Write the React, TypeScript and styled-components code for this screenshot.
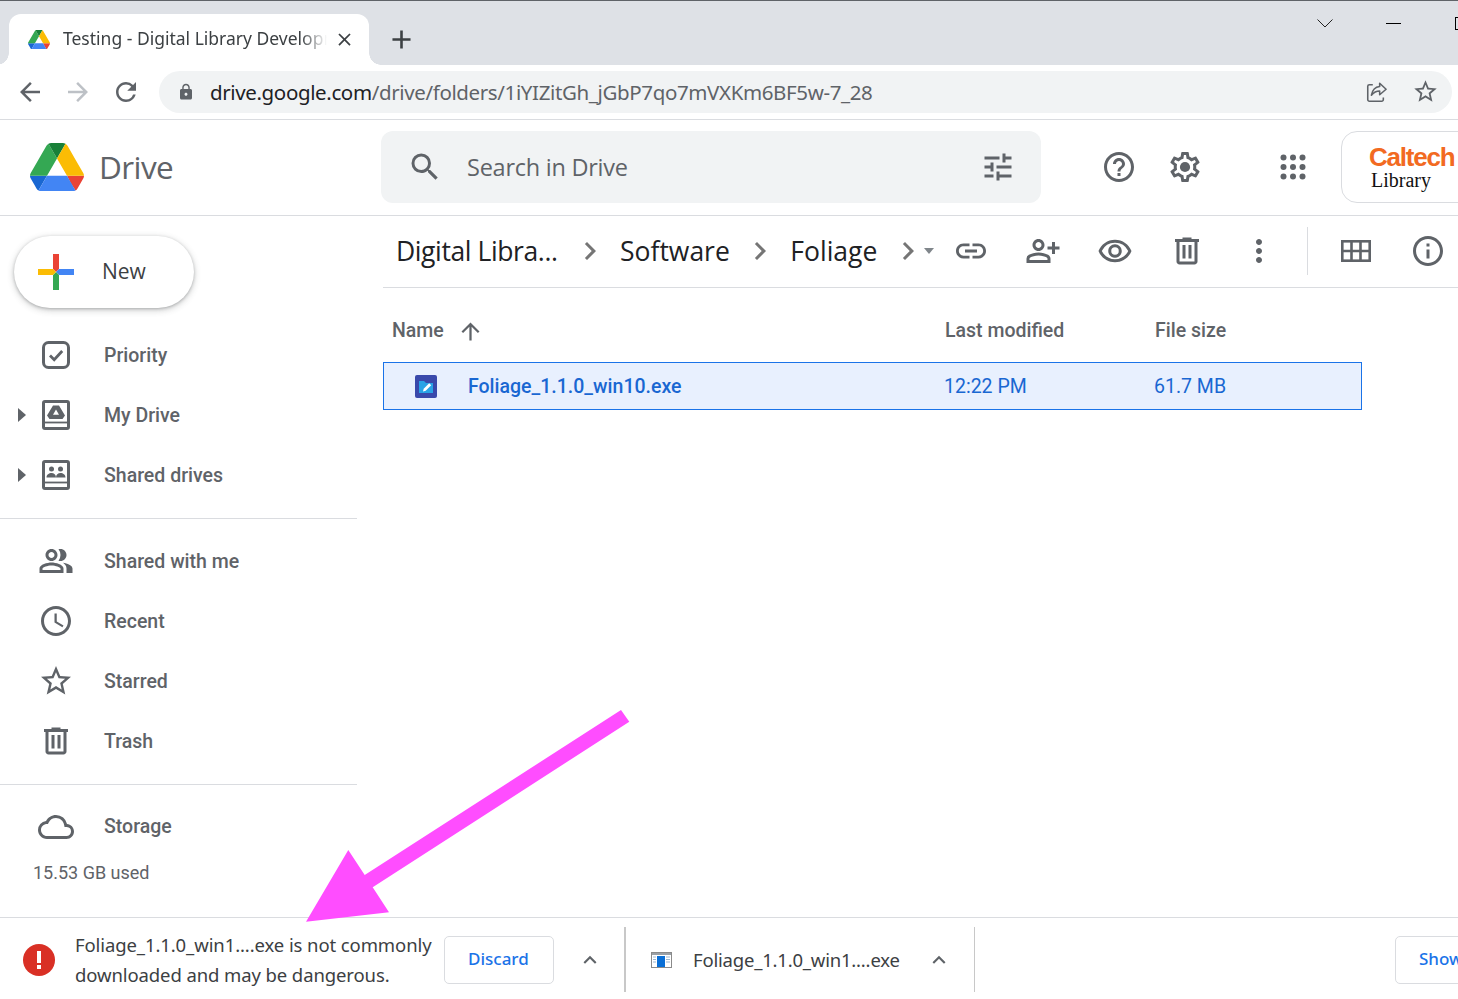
import React from "react";
import styled, { createGlobalStyle } from "styled-components";
import {
  MdAdd,
  MdArrowBack,
  MdArrowForward,
  MdArrowUpward,
  MdChevronRight,
  MdClose,
  MdExpandLess,
  MdHelpOutline,
  MdInfoOutline,
  MdLink,
  MdLock,
  MdMoreVert,
  MdOutlineAccessTime,
  MdOutlineCloud,
  MdOutlinePeopleAlt,
  MdOutlinePersonAddAlt,
  MdOutlineRemoveRedEye,
  MdRefresh,
  MdSearch,
  MdStarBorder,
  MdTune,
} from "react-icons/md";

const GlobalStyle = createGlobalStyle`
  html, body {
    margin: 0;
    padding: 0;
    background: #fff;
  }
  * {
    box-sizing: border-box;
  }
`;

const grey = "#5f6368";
const chromeFont = `"Noto Sans", "Open Sans", sans-serif`;
const googleFont = `"Open Sans", "Noto Sans", sans-serif`;
const bodyFont = `Roboto, "Liberation Sans", sans-serif`;

const Page = styled.div`
  position: relative;
  width: 1458px;
  height: 999px;
  overflow: hidden;
  display: flex;
  flex-direction: column;
  background: #fff;
`;

const TabStrip = styled.div`
  height: 65px;
  flex-shrink: 0;
  display: flex;
  align-items: flex-end;
  padding-left: 9px;
  background: #dee1e6;
  border-top: 1px solid #5f6368;
`;

const Tab = styled.div`
  position: relative;
  width: 360px;
  height: 51px;
  flex-shrink: 0;
  display: flex;
  align-items: center;
  padding-left: 19px;
  background: #fff;
  border-radius: 12px 12px 0 0;

  &::before,
  &::after {
    content: "";
    position: absolute;
    bottom: 0;
    width: 12px;
    height: 12px;
    background: radial-gradient(circle at 0 0, #dee1e6 11.5px, #fff 12px);
  }
  &::before {
    left: -12px;
  }
  &::after {
    right: -12px;
    transform: scaleX(-1);
  }
`;

const TabTitle = styled.span`
  width: 264px;
  margin-left: 13px;
  padding-bottom: 4px;
  overflow: hidden;
  white-space: nowrap;
  font: 400 17.5px/24px ${chromeFont};
  letter-spacing: 0;
  color: #3c4043;
  -webkit-mask-image: linear-gradient(to right, #000 90%, transparent 100%);
  mask-image: linear-gradient(to right, #000 90%, transparent 100%);
`;

const TabClose = styled.span`
  display: flex;
  margin-left: 7px;
  color: #3c4043;
`;

const NewTab = styled.span`
  display: flex;
  align-self: center;
  margin: 12px 0 0 17px;
  color: #3c4043;
`;

const WindowControls = styled.div`
  margin-left: auto;
  margin-right: -11px;
  align-self: flex-start;
  display: flex;
  align-items: center;
  height: 44px;
  flex-shrink: 0;
`;

const WindowMin = styled.span`
  width: 15px;
  height: 1px;
  margin: 0 54px 0 53px;
  background: #000;
`;

const WindowMax = styled.span`
  width: 14px;
  height: 13px;
  border: 1px solid #000;
`;

const Toolbar = styled.div`
  height: 55px;
  flex-shrink: 0;
  display: flex;
  align-items: center;
  gap: 18px;
  padding: 0 6px 1px 15px;
  border-bottom: 1px solid #dadce0;
`;

const NavIcon = styled.span<{ $disabled?: boolean }>`
  display: flex;
  width: 30px;
  color: ${(p) => (p.$disabled ? "#bdc1c6" : grey)};
`;

const Omnibox = styled.div`
  flex: 1;
  height: 42px;
  display: flex;
  align-items: center;
  padding: 0 13px 0 18px;
  background: #f1f3f4;
  border-radius: 21px;
  color: ${grey};
`;

const UrlText = styled.span`
  margin-left: 15px;
  flex: 1;
  white-space: nowrap;
  font: 400 20.5px/28px ${chromeFont};
  letter-spacing: -0.37px;
  color: ${grey};

  b {
    font-weight: 400;
    color: #202124;
  }
`;

const OmniIcons = styled.span`
  display: flex;
  align-items: center;
  gap: 25px;
`;

const AppHeader = styled.header`
  height: 96px;
  flex-shrink: 0;
  display: flex;
  align-items: center;
  padding-bottom: 1px;
  border-bottom: 1px solid #dadce0;
`;

const Brand = styled.div`
  width: 381px;
  flex-shrink: 0;
  display: flex;
  align-items: center;
  gap: 15px;
  padding-left: 30px;
  font: 400 31.5px/40px ${googleFont};
  letter-spacing: -0.6px;
  color: ${grey};
`;

const SearchBox = styled.div`
  width: 660px;
  height: 72px;
  flex-shrink: 0;
  display: flex;
  align-items: center;
  gap: 24px;
  padding: 0 25px 0 26px;
  background: #f1f3f4;
  border-radius: 12px;
  color: ${grey};
`;

const Placeholder = styled.span`
  flex: 1;
  font: 400 23.5px/30px ${googleFont};
  letter-spacing: -0.25px;
  color: ${grey};
`;

const HeaderIcon = styled.span<{ $left: number }>`
  display: flex;
  flex-shrink: 0;
  margin-left: ${(p) => p.$left}px;
  color: ${grey};
`;

const OrgBadge = styled.div`
  width: 150px;
  height: 72px;
  flex-shrink: 0;
  margin-left: 30px;
  padding: 12px 0 0 27px;
  border: 1px solid #dadce0;
  border-radius: 16px;
`;

const OrgName = styled.div`
  font: 700 26px/26px "Liberation Sans", sans-serif;
  letter-spacing: -1.2px;
  color: #f26a21;
`;

const OrgSub = styled.div`
  margin-left: 2px;
  font: 400 20px/20px "Liberation Serif", serif;
  color: #111;
`;

const Main = styled.div`
  flex: 1;
  display: flex;
  min-height: 0;
`;

const Sidebar = styled.nav`
  width: 357px;
  flex-shrink: 0;
`;

const NewButton = styled.div`
  width: 180px;
  height: 72px;
  margin: 20px 0 17px 14px;
  display: flex;
  align-items: center;
  gap: 28px;
  padding-left: 24px;
  background: #fff;
  border-radius: 36px;
  box-shadow: 0 1px 3px rgba(60, 64, 67, 0.3), 0 2px 6px 1px rgba(60, 64, 67, 0.2);
  font: 500 21px/28px ${googleFont};
  color: #3c4043;
`;

const NewLabel = styled.span`
  padding-bottom: 2px;
`;

const NavGroup = styled.div<{ $divider?: boolean }>`
  padding: 0 0 13px;
  margin-bottom: 12px;
  border-bottom: ${(p) => (p.$divider ? "1px solid #dadce0" : "0")};
`;

const NavRow = styled.div`
  height: 60px;
  display: flex;
  align-items: center;
  padding-left: 16px;
  color: ${grey};
`;

const CaretSlot = styled.span`
  width: 22px;
  flex-shrink: 0;
  display: flex;
`;

const Caret = styled.span`
  margin-left: 2px;
  border-left: 8px solid ${grey};
  border-top: 7px solid transparent;
  border-bottom: 7px solid transparent;
`;

const NavIconBox = styled.span`
  width: 36px;
  height: 36px;
  flex-shrink: 0;
  display: flex;
  margin-right: 30px;
`;

const NavLabel = styled.span`
  padding-top: 2px;
  font: 500 19.5px/26px ${bodyFont};
  color: ${grey};
`;

const StorageLabel = styled(NavLabel)`
  padding-top: 0;
`;

const StorageUsed = styled.div`
  margin-top: 4px;
  padding-left: 33px;
  font: 400 18px/24px ${bodyFont};
  color: ${grey};
`;

const Content = styled.section`
  flex: 1;
  min-width: 0;
  margin-left: 26px;
`;

const CrumbBar = styled.div`
  height: 72px;
  display: flex;
  align-items: center;
  padding: 0 12px 1px 13px;
  border-bottom: 1px solid #dadce0;
`;

const Crumb = styled.span<{ $truncated?: boolean }>`
  padding-right: ${(p) => (p.$truncated ? 2 : 0)}px;
  font: 400 26.5px/34px ${googleFont};
  letter-spacing: ${(p) => (p.$truncated ? -0.4 : 0)}px;
  color: #202124;
  white-space: nowrap;
`;

const CrumbChevron = styled.span`
  display: flex;
  margin: 0 12px 0 12.5px;
  color: #757575;
`;

const DropTriangle = styled.span`
  margin-left: -14px;
  border-top: 6px solid #80868b;
  border-left: 5px solid transparent;
  border-right: 5px solid transparent;
`;

const Actions = styled.div`
  margin-left: auto;
  display: flex;
  align-items: center;
  gap: 36px;
  color: ${grey};

  svg {
    display: block;
  }
`;

const ActionDivider = styled.span`
  width: 1px;
  height: 48px;
  margin: 0 -6px;
  background: #dadce0;
`;

const FileGrid = styled.div`
  width: 979px;
`;

const ColumnHeader = styled.div`
  height: 74px;
  display: grid;
  grid-template-columns: 562px 210px 1fr;
  align-items: center;
  padding-top: 12px;
  font: 500 19.5px/26px ${bodyFont};
  color: ${grey};
`;

const NameHead = styled.span`
  display: flex;
  align-items: center;
  gap: 13px;
  padding-left: 9px;
`;

const FileRow = styled.div`
  height: 48px;
  display: grid;
  grid-template-columns: 560px 210px 1fr;
  align-items: center;
  background: #e8f0fe;
  border: 1px solid #1a73e8;
  font: 400 19.5px/26px ${bodyFont};
  color: #1967d2;
`;

const FileName = styled.span`
  display: flex;
  align-items: center;
  gap: 31px;
  padding-left: 31px;
  font-weight: 500;
`;

const FileCell = styled.span`
  padding-top: 2px;
`;

const DownloadBar = styled.footer`
  height: 82px;
  flex-shrink: 0;
  display: flex;
  align-items: stretch;
  padding: 9px 0 7px 23px;
  border-top: 1px solid #dadce0;
  font: 400 18.5px/30px ${chromeFont};
  color: #3c4043;
`;

const BarItem = styled.div`
  display: flex;
  align-items: center;
  flex-shrink: 0;
`;

const WarningText = styled.div`
  width: 369px;
  margin-left: 20px;
  padding-top: 1px;
  white-space: nowrap;
  letter-spacing: -0.1px;
`;

const BarButton = styled.span<{ $push?: boolean }>`
  width: 110px;
  height: 48px;
  flex-shrink: 0;
  display: flex;
  align-items: center;
  padding: 0 0 2px 23px;
  border: 1px solid #dadce0;
  border-radius: 5px;
  font: 500 17px/24px ${chromeFont};
  color: #1a73e8;
  white-space: nowrap;
  ${(p) => p.$push && "margin-left: auto; margin-right: -47px; align-self: center;"}
`;

const ExpandIcon = styled.span<{ $left: number }>`
  display: flex;
  margin-left: ${(p) => p.$left}px;
  color: ${grey};
`;

const BarDivider = styled.span<{ $thick?: boolean }>`
  width: ${(p) => (p.$thick ? 2 : 1)}px;
  flex-shrink: 0;
  margin-left: ${(p) => (p.$thick ? 21 : 22)}px;
  background: #c8c8c8;
`;

const DownloadName = styled.span`
  width: 207px;
  margin-left: 21px;
  padding-top: 1px;
  white-space: nowrap;
  letter-spacing: -0.2px;
`;

const ArrowOverlay = styled.svg`
  position: absolute;
  left: 0;
  top: 0;
  pointer-events: none;
`;

const DriveLogo = ({ width }: { width: number }) => (
  <svg width={width} viewBox="0 0 87.3 78" style={{ flexShrink: 0, display: "block" }}>
    <path d="m6.6 66.85 3.85 6.65c.8 1.4 1.95 2.5 3.3 3.3l13.75-23.8h-27.5c0 1.55.4 3.1 1.2 4.5z" fill="#1967d2" />
    <path d="m43.65 25-13.75-23.8c-1.35.8-2.5 1.9-3.3 3.3l-25.4 44a9.06 9.06 0 0 0 -1.2 4.5h27.5z" fill="#34a853" />
    <path d="m73.55 76.8c1.35-.8 2.5-1.9 3.3-3.3l1.6-2.75 7.65-13.25c.8-1.4 1.2-2.95 1.2-4.5h-27.502l5.852 11.5z" fill="#ea4335" />
    <path d="m43.65 25 13.75-23.8c-1.35-.8-2.9-1.2-4.5-1.2h-18.5c-1.6 0-3.15.45-4.5 1.2z" fill="#188038" />
    <path d="m59.8 53h-32.3l-13.75 23.8c1.35.8 2.9 1.2 4.5 1.2h50.8c1.6 0 3.15-.45 4.5-1.2z" fill="#4285f4" />
    <path d="m73.4 26.5-12.7-22c-.8-1.4-1.95-2.5-3.3-3.3l-13.75 23.8 16.15 28h27.45c0-1.55-.4-3.1-1.2-4.5z" fill="#fbbc04" />
  </svg>
);

const ChevronThin = () => (
  <svg width="16" height="9" viewBox="0 0 16 9" fill="none" stroke="#222" strokeWidth="1">
    <path d="M.5.5l7.5 7.5L15.5.5" />
  </svg>
);

const ShareIcon = () => (
  <svg width="22" height="22" viewBox="0 0 24 24" fill="none" stroke={grey} strokeWidth="1.7" strokeLinejoin="round">
    <path d="M8.5 4H4.8A1.8 1.8 0 0 0 3 5.8v14.4A1.8 1.8 0 0 0 4.8 22h13.4a1.8 1.8 0 0 0 1.8-1.8V18" />
    <path d="M23 9l-7-6.5V6c-5.500.5-8 4-9 9.500 2.500-3 5.200-4.500 9-4.500v4z" />
  </svg>
);

const GearIcon = () => (
  <svg width="36" height="36" viewBox="0 0 24 24" fill={grey}>
    <path d="M19.43 12.98c.04-.32.07-.64.07-.98 0-.34-.03-.66-.07-.98l2.11-1.65c.19-.15.24-.42.12-.64l-2-3.46c-.09-.16-.26-.25-.44-.25-.06 0-.12.01-.17.03l-2.49 1c-.52-.4-1.08-.73-1.69-.98l-.38-2.65C14.46 2.18 14.25 2 14 2h-4c-.25 0-.46.18-.49.42l-.38 2.65c-.61.25-1.17.59-1.69.98l-2.49-1c-.06-.02-.12-.03-.18-.03-.17 0-.34.09-.43.25l-2 3.46c-.13.22-.07.49.12.64l2.11 1.65c-.04.32-.07.65-.07.98 0 .33.03.66.07.98l-2.11 1.65c-.19.15-.24.42-.12.64l2 3.46c.09.16.26.25.44.25.06 0 .12-.01.17-.03l2.49-1c.52.4 1.08.73 1.69.98l.38 2.65c.03.24.24.42.49.42h4c.25 0 .46-.18.49-.42l.38-2.65c.61-.25 1.17-.59 1.69-.98l2.49 1c.06.02.12.03.18.03.17 0 .34-.09.43-.25l2-3.46c.12-.22.07-.49-.12-.64l-2.11-1.65zm-1.98-1.71c.04.31.05.52.05.73 0 .21-.02.43-.05.73l-.14 1.13.89.7 1.08.84-.7 1.21-1.27-.51-1.04-.42-.9.68c-.43.32-.84.56-1.25.73l-1.06.43-.16 1.13-.2 1.35h-1.4l-.19-1.35-.16-1.13-1.06-.43c-.43-.18-.83-.41-1.23-.71l-.91-.7-1.06.43-1.27.51-.7-1.21 1.08-.84.89-.7-.14-1.13c-.03-.31-.05-.54-.05-.74s.02-.43.05-.73l.14-1.13-.89-.7-1.08-.84.7-1.21 1.27.51 1.04.42.9-.68c.43-.32.84-.56 1.25-.73l1.06-.43.16-1.13.2-1.35h1.39l.19 1.35.16 1.13 1.06.43c.43.18.83.41 1.23.71l.91.7 1.06-.43 1.27-.51.7 1.21-1.07.85-.89.7.14 1.13z" />
    <circle cx="12" cy="12" r="3.4" />
  </svg>
);

const AppsIcon = () => (
  <svg width="36" height="36" viewBox="0 0 36 36" fill={grey}>
    {[8.500, 18, 27.500].map((y) =>
      [8.500, 18, 27.500].map((x) => <circle key={`${x}-${y}`} cx={x} cy={y} r="3" />)
    )}
  </svg>
);

const TrashIcon = () => (
  <svg width="36" height="36" viewBox="0 0 24 24" fill={grey}>
    <path d="M15 4V3H9v1H4v2h1v13c0 1.100.9 2 2 2h10c1.100 0 2-.9 2-2V6h1V4h-5zm2 15H7V6h10v13zM9 8h2v9H9zm4 0h2v9h-2z" />
  </svg>
);

const GridViewIcon = () => (
  <svg width="36" height="36" viewBox="0 0 36 36" fill="none" stroke={grey} strokeWidth="2.6">
    <rect x="4.300" y="8.300" width="27.400" height="19.400" />
    <path d="M13.500 8v20M22.500 8v20M4 18h28" />
  </svg>
);

const PriorityIcon = () => (
  <svg width="36" height="36" viewBox="0 0 36 36" fill="none" stroke={grey} strokeWidth="3">
    <rect x="5.500" y="5.500" width="25" height="25" rx="5" />
    <path d="M12 18.500l4.200 4.200 8-8.700" strokeWidth="2.800" />
  </svg>
);

const BookFrame = ({ children }: { children: React.ReactNode }) => (
  <svg width="36" height="36" viewBox="0 0 36 36" fill="none">
    <rect x="5.500" y="4.500" width="25" height="27" rx="1.500" stroke={grey} strokeWidth="3" />
    <path d="M5 25.500h26" stroke={grey} strokeWidth="1.800" />
    {children}
  </svg>
);

const MyDriveIcon = () => (
  <BookFrame>
    <path
      fillRule="evenodd"
      fill={grey}
      d="M15 8.500h6l6 10-2.500 3.500h-13L9 18.500zM18 12.500l-3 5.200h6z"
    />
  </BookFrame>
);

const SharedDrivesIcon = () => (
  <BookFrame>
    <circle cx="13.500" cy="12" r="2.500" fill={grey} />
    <circle cx="22.500" cy="12" r="2.500" fill={grey} />
    <path d="M8.500 20.500c0-3 2.500-4.500 5-4.500s4.500 1.500 4.500 4.500zM18 20.500c0-3 2-4.500 4.500-4.500s5 1.500 5 4.500z" fill={grey} />
  </BookFrame>
);

const NewPlus = () => (
  <svg width="36" height="36" viewBox="0 0 36 36" style={{ flexShrink: 0 }}>
    <path d="M15 0h6v15l-3 3-3-3z" fill="#ea4335" />
    <path d="M21 15h15v6H21l-3-3z" fill="#4285f4" />
    <path d="M15 36h6V21l-3-3-3 3z" fill="#34a853" />
    <path d="M0 15h15l3 3-3 3H0z" fill="#fbbc04" />
  </svg>
);

const FileIcon = () => (
  <svg width="22" height="23" viewBox="0 0 22 23" style={{ flexShrink: 0 }}>
    <rect width="22" height="23" rx="2" fill="#3949ab" />
    <path d="M4 6h5l2 2h7v10H4z" fill="#29a3e6" />
    <path d="M8 16.500l.7-2.800 5.500-5.500 2 2-5.500 5.500z" fill="#fff" />
  </svg>
);

const WarningIcon = () => (
  <svg width="32" height="32" viewBox="0 0 32 32" style={{ flexShrink: 0 }}>
    <circle cx="16" cy="16" r="16" fill="#d93025" />
    <rect x="14" y="7" width="4" height="12" fill="#fff" />
    <rect x="14" y="21" width="4" height="4" fill="#fff" />
  </svg>
);

const ExeIcon = () => (
  <svg width="21" height="16" viewBox="0 0 21 16" style={{ marginLeft: 25, flexShrink: 0 }}>
    <rect x=".5" y=".5" width="20" height="15" fill="#fff" stroke="#8a8a8a" />
    <rect x="1" y="1" width="19" height="2" fill="#9aa0a6" />
    <rect x="6" y="4" width="8" height="11" fill="#0a6fd6" />
    <path d="M2 5h3M2 7.500h3M2 10h3M15 5h4M15 7.500h4M15 10h4" stroke="#9db7d1" />
  </svg>
);

const navTop = [
  { label: "Priority", icon: <PriorityIcon />, caret: false },
  { label: "My Drive", icon: <MyDriveIcon />, caret: true },
  { label: "Shared drives", icon: <SharedDrivesIcon />, caret: true },
];

const navMid = [
  { label: "Shared with me", icon: <MdOutlinePeopleAlt size={36} /> },
  { label: "Recent", icon: <MdOutlineAccessTime size={36} /> },
  { label: "Starred", icon: <MdStarBorder size={36} /> },
  { label: "Trash", icon: <TrashIcon /> },
];

const crumbs = ["Digital Libra...", "Software", "Foliage"];

export default function App() {
  return (
    <Page>
      <GlobalStyle />
      <TabStrip>
        <Tab>
          <DriveLogo width={22} />
          <TabTitle>Testing - Digital Library Development</TabTitle>
          <TabClose>
            <MdClose size={21} />
          </TabClose>
        </Tab>
        <NewTab>
          <MdAdd size={31} />
        </NewTab>
        <WindowControls>
          <ChevronThin />
          <WindowMin />
          <WindowMax />
        </WindowControls>
      </TabStrip>

      <Toolbar>
        <NavIcon>
          <MdArrowBack size={30} />
        </NavIcon>
        <NavIcon $disabled>
          <MdArrowForward size={30} />
        </NavIcon>
        <NavIcon>
          <MdRefresh size={30} />
        </NavIcon>
        <Omnibox>
          <MdLock size={18} />
          <UrlText>
            <b>drive.google.com</b>/drive/folders/1iYIZitGh_jGbP7qo7mVXKm6BF5w-7_28
          </UrlText>
          <OmniIcons>
            <ShareIcon />
            <MdStarBorder size={27} />
          </OmniIcons>
        </Omnibox>
      </Toolbar>

      <AppHeader>
        <Brand>
          <DriveLogo width={54} />
          Drive
        </Brand>
        <SearchBox>
          <MdSearch size={36} />
          <Placeholder>Search in Drive</Placeholder>
          <MdTune size={36} />
        </SearchBox>
        <HeaderIcon $left={60}>
          <MdHelpOutline size={36} />
        </HeaderIcon>
        <HeaderIcon $left={30}>
          <GearIcon />
        </HeaderIcon>
        <HeaderIcon $left={72}>
          <AppsIcon />
        </HeaderIcon>
        <OrgBadge>
          <OrgName>Caltech</OrgName>
          <OrgSub>Library</OrgSub>
        </OrgBadge>
      </AppHeader>

      <Main>
        <Sidebar>
          <NewButton>
            <NewPlus />
            <NewLabel>New</NewLabel>
          </NewButton>
          <NavGroup $divider>
            {navTop.map((item) => (
              <NavRow key={item.label}>
                <CaretSlot>{item.caret && <Caret />}</CaretSlot>
                <NavIconBox>{item.icon}</NavIconBox>
                <NavLabel>{item.label}</NavLabel>
              </NavRow>
            ))}
          </NavGroup>
          <NavGroup $divider>
            {navMid.map((item) => (
              <NavRow key={item.label}>
                <CaretSlot />
                <NavIconBox>{item.icon}</NavIconBox>
                <NavLabel>{item.label}</NavLabel>
              </NavRow>
            ))}
          </NavGroup>
          <NavRow>
            <CaretSlot />
            <NavIconBox>
              <MdOutlineCloud size={36} />
            </NavIconBox>
            <StorageLabel>Storage</StorageLabel>
          </NavRow>
          <StorageUsed>15.53 GB used</StorageUsed>
        </Sidebar>

        <Content>
          <CrumbBar>
            {crumbs.map((crumb, i) => (
              <React.Fragment key={crumb}>
                <Crumb $truncated={i === 0}>{crumb}</Crumb>
                <CrumbChevron>
                  <MdChevronRight size={36} />
                </CrumbChevron>
              </React.Fragment>
            ))}
            <DropTriangle />
            <Actions>
              <MdLink size={36} />
              <MdOutlinePersonAddAlt size={36} />
              <MdOutlineRemoveRedEye size={36} />
              <TrashIcon />
              <MdMoreVert size={36} />
              <ActionDivider />
              <GridViewIcon />
              <MdInfoOutline size={36} />
            </Actions>
          </CrumbBar>

          <FileGrid>
            <ColumnHeader>
              <NameHead>
                Name
                <MdArrowUpward size={27} />
              </NameHead>
              <span>Last modified</span>
              <span>File size</span>
            </ColumnHeader>
            <FileRow>
              <FileName>
                <FileIcon />
                <FileCell>Foliage_1.1.0_win10.exe</FileCell>
              </FileName>
              <FileCell>12:22 PM</FileCell>
              <FileCell>61.7 MB</FileCell>
            </FileRow>
          </FileGrid>
        </Content>
      </Main>

      <DownloadBar>
        <BarItem>
          <WarningIcon />
          <WarningText>
            Foliage_1.1.0_win1....exe is not commonly
            <br />
            downloaded and may be dangerous.
          </WarningText>
          <BarButton>Discard</BarButton>
          <ExpandIcon $left={23}>
            <MdExpandLess size={26} />
          </ExpandIcon>
        </BarItem>
        <BarDivider $thick />
        <BarItem>
          <ExeIcon />
          <DownloadName>Foliage_1.1.0_win1....exe</DownloadName>
          <ExpandIcon $left={26}>
            <MdExpandLess size={26} />
          </ExpandIcon>
        </BarItem>
        <BarDivider />
        <BarButton $push>Show all</BarButton>
      </DownloadBar>

      <ArrowOverlay width="1458" height="999">
        <polygon
          points="621,710 629.300,721.700 372.700,887.300 389,912.300 306,921.700 348.300,850 364.700,875"
          fill="#ff4dff"
        />
      </ArrowOverlay>
    </Page>
  );
}
